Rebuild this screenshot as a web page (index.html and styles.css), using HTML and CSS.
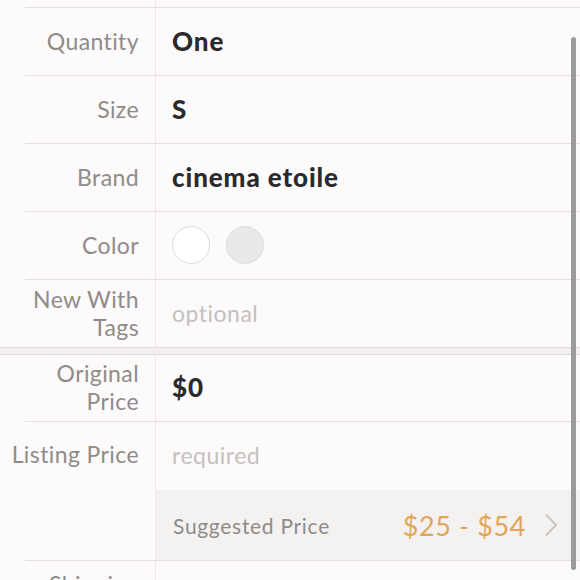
FILE: index.html
```html
<!DOCTYPE html>
<html lang="en">
<head>
  <meta charset="UTF-8">
  <meta name="viewport" content="width=device-width, initial-scale=1">
  <title>Listing Details</title>
  <link rel="stylesheet" href="styles.css">
</head>
<body>

  <div id="formulario">
    <div class="fila corta">
      <div class="etiqueta"></div>
      <div class="valor"></div>
    </div>
    <div class="fila">
      <div class="etiqueta">Quantity</div>
      <div class="valor">One</div>
    </div>
    <div class="fila">
      <div class="etiqueta">Size</div>
      <div class="valor">S</div>
    </div>
    <div class="fila">
      <div class="etiqueta">Brand</div>
      <div class="valor">cinema etoile</div>
    </div>
    <div class="fila">
      <div class="etiqueta">Color</div>
      <div class="valor">
        <span class="circulo blanco"></span>
        <span class="circulo gris"></span>
      </div>
    </div>
    <div class="fila sin-linea">
      <div class="etiqueta">New With<br>Tags</div>
      <div class="valor vacio">optional</div>
    </div>

    <div class="separador"></div>

    <div class="fila baja">
      <div class="etiqueta">Original<br>Price</div>
      <div class="valor">$0</div>
    </div>
    <div class="fila precio">
      <div class="etiqueta arriba">Listing Price</div>
      <div class="columna">
        <div class="valor vacio entrada">required</div>
        <div class="sugerido">
          <span class="sugerido-texto">Suggested Price</span>
          <span class="sugerido-rango">$25 - $54</span>
          <svg class="flecha" width="14" height="24" viewBox="0 0 14 24">
            <path d="M2 1.5 L12 12 L2 22.5" fill="none" stroke="#c9c6c4" stroke-width="2"/>
          </svg>
        </div>
      </div>
    </div>
    <div class="fila sin-linea">
      <div class="etiqueta envio">Shipping</div>
      <div class="valor"></div>
    </div>
  </div>

  <div id="scroll"></div>

</body>
</html>
```

FILE: styles.css
```css
body {
  font-family: Lato, "Liberation Sans", sans-serif;
  margin: 0;
  padding: 0;
  background: #fcfafa;
  overflow: hidden;
  height: 580px;
  position: relative;
}
#formulario {
  display: flex;
  flex-direction: column;
}
.fila {
  display: flex;
  margin-left: 25px;
  border-bottom: 1px solid #e3e0df;
  height: 67px;
}
.fila.corta {
  height: 7px;
}
.fila.baja {
  height: 66px;
}
.fila.sin-linea {
  border-bottom: none;
}
.etiqueta {
  width: 114px;
  flex: none;
  padding-right: 16px;
  padding-bottom: 2px;
  border-right: 1px solid #ebe8e7;
  display: flex;
  align-items: center;
  justify-content: flex-end;
  text-align: right;
  font-size: 23px;
  line-height: 28px;
  color: #8f8b88;
  letter-spacing: 0.4px;
  white-space: nowrap;
}
.etiqueta.arriba {
  align-items: flex-start;
  padding-top: 18px;
}
.etiqueta.envio {
  align-items: flex-start;
  padding-top: 9px;
}
.valor {
  flex: 1;
  display: flex;
  align-items: center;
  gap: 16px;
  padding-left: 16px;
  padding-bottom: 2px;
  font-size: 26px;
  font-weight: 900;
  color: #2b2a2a;
  letter-spacing: 0.9px;
}
.valor.vacio {
  font-size: 23px;
  font-weight: normal;
  color: #c4c1be;
  letter-spacing: 0.5px;
}
.valor.entrada {
  height: 66px;
  flex: none;
}
.circulo {
  width: 36px;
  height: 36px;
  border-radius: 50%;
  border: 1px solid #dedcdb;
}
.blanco {
  background: #ffffff;
}
.gris {
  background: #e8e9ea;
}
.separador {
  height: 6px;
  background: #f2f0ef;
  border-top: 1px solid #e0dddc;
  border-bottom: 1px solid #e0dddc;
}
.fila.precio {
  height: auto;
}
.columna {
  flex: 1;
  display: flex;
  flex-direction: column;
}
.sugerido {
  height: 70px;
  background: #f4f2f1;
  display: flex;
  align-items: center;
  padding-left: 17px;
  padding-right: 22px;
}
.sugerido-texto {
  flex: 1;
  font-size: 21px;
  color: #8f8b88;
  letter-spacing: 0.7px;
}
.sugerido-rango {
  font-size: 27px;
  color: #e2a556;
  letter-spacing: 0.6px;
  margin-right: 18px;
}
#scroll {
  position: absolute;
  right: 4px;
  top: 37px;
  width: 5px;
  height: 533px;
  border-radius: 3px;
  background: #9b9b9b;
}
```
